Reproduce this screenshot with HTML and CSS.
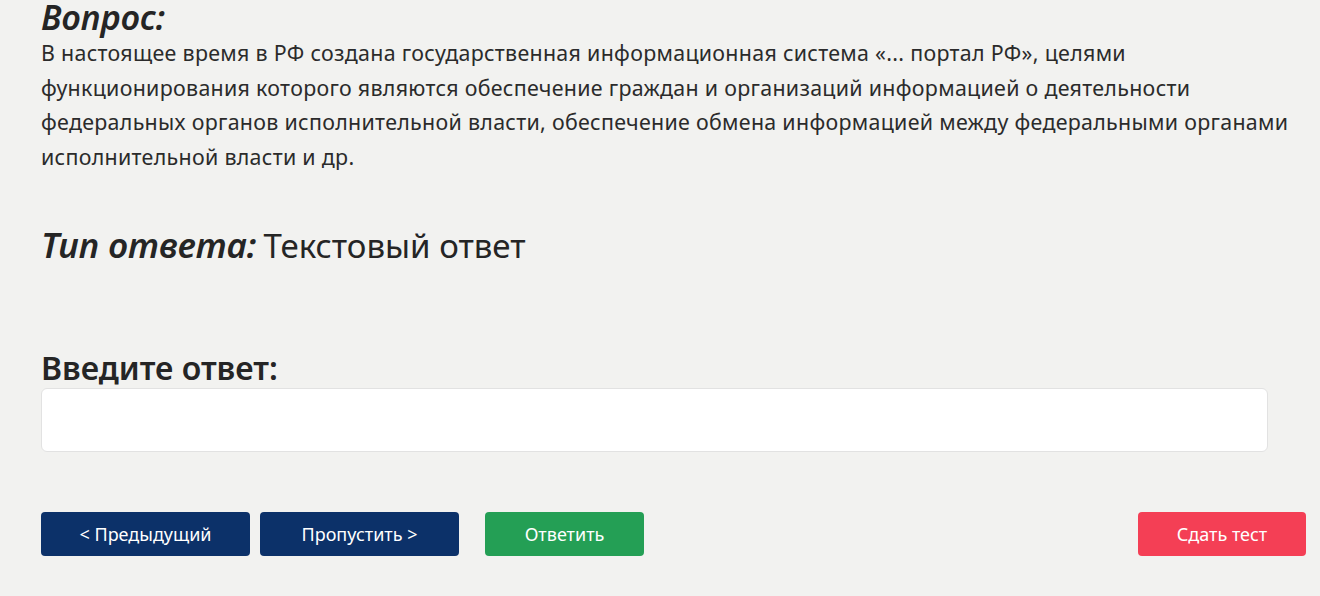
FILE: index.html
```html
<!DOCTYPE html>
<html lang="ru">
<head>
<meta charset="utf-8">
<link rel="stylesheet" href="styles.css">
</head>
<body>
<main class="page">
  <h2 class="q-title">Вопрос:</h2>
  <p class="q-text">В настоящее время в РФ создана государственная информационная система «... портал РФ», целями функционирования которого являются обеспечение граждан и организаций информацией о деятельности федеральных органов исполнительной власти, обеспечение обмена информацией между федеральными органами исполнительной власти и др.</p>
  <div class="type-row"><span class="type-label">Тип ответа:</span><span class="type-value">Текстовый ответ</span></div>
  <label class="answer-label" for="ans">Введите ответ:</label>
  <input id="ans" class="answer-input" type="text">
  <div class="actions">
    <button class="btn btn-navy btn-prev">&lt; Предыдущий</button>
    <button class="btn btn-navy btn-skip">Пропустить &gt;</button>
    <button class="btn btn-green btn-answer">Ответить</button>
    <button class="btn btn-red btn-submit">Сдать тест</button>
  </div>
</main>
</body>
</html>
```

FILE: styles.css
```css
* { box-sizing: border-box; }
html, body {
  margin: 0;
  padding: 0;
  background: #f2f2f0;
}
body {
  font-family: "Noto Sans", "Open Sans", "DejaVu Sans", sans-serif;
  color: #252525;
}
.page {
  padding: 0 14px 0 41px;
  width: 1320px;
  height: 596px;
  overflow: hidden;
}
.q-title {
  margin: 0;
  font-size: 34px;
  font-style: italic;
  font-weight: 600;
  line-height: 32px;
  padding-top: 1px;
}
.q-text {
  margin: 3px 0 0 0;
  font-size: 21.4px;
  line-height: 34.7px;
  letter-spacing: 0.3px;
  width: 1265px;
  color: #2b2b2b;
}
.type-row {
  margin-top: 48px;
  line-height: 44px;
}
.type-label {
  font-size: 35px;
  font-style: italic;
  font-weight: 600;
  margin-right: 7px;
}
.type-value {
  font-size: 33px;
  font-weight: 400;
}
.answer-label {
  display: block;
  margin-top: 74px;
  font-size: 32px;
  font-weight: 600;
  line-height: 40px;
}
.answer-input {
  display: block;
  width: 1227px;
  height: 64px;
  border: 1px solid #e2e2e2;
  border-radius: 6px;
  background: #fff;
  margin: 0;
}
.actions {
  display: flex;
  margin-top: 60px;
  width: 1265px;
}
.btn {
  height: 44px;
  border: none;
  border-radius: 4px;
  color: #fff;
  font-family: "Noto Sans", "Open Sans", sans-serif;
  font-size: 18px;
  padding: 0;
}
.btn-navy { background: #0c3169; }
.btn-green { background: #249f55; }
.btn-red { background: #f43f55; }
.btn-prev { width: 209px; }
.btn-skip { width: 199px; margin-left: 10px; }
.btn-answer { width: 159px; margin-left: 26px; }
.btn-submit { width: 168px; margin-left: auto; }
```
